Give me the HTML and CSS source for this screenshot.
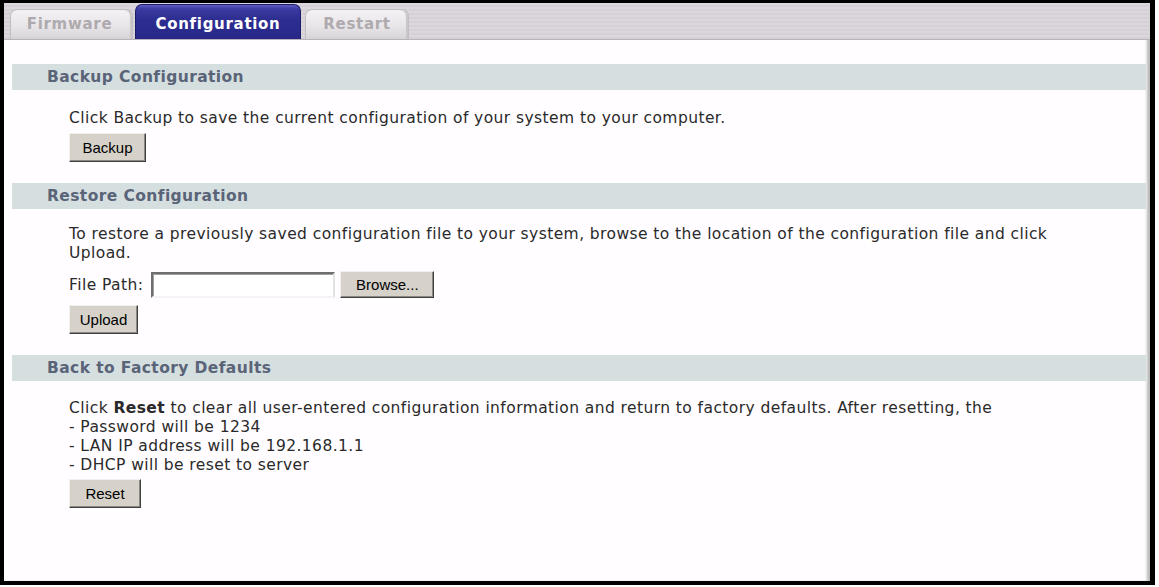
FILE: index.html
```html
<!DOCTYPE html>
<html>
<head>
<meta charset="utf-8">
<title>Configuration</title>
<link rel="stylesheet" href="styles.css">
</head>
<body>
<div class="frame">
  <div class="page">
    <div class="tabbar">
      <div class="tab tab-off tab-firmware">Firmware</div>
      <div class="tab tab-on tab-config">Configuration</div>
      <div class="tab tab-off tab-restart">Restart</div>
    </div>
    <div class="content">
      <section class="section sec-backup">
        <div class="section-head">Backup Configuration</div>
        <div class="section-body">
          <p class="text">Click Backup to save the current configuration of your system to your computer.</p>
          <button class="btn btn-backup">Backup</button>
        </div>
      </section>
      <section class="section sec-restore">
        <div class="section-head">Restore Configuration</div>
        <div class="section-body">
          <p class="text">To restore a previously saved configuration file to your system, browse to the location of the configuration file and click<br>Upload.</p>
          <div class="file-row">
            <span class="label">File Path:</span>
            <span class="input"></span>
            <button class="btn btn-browse">Browse...</button>
          </div>
          <button class="btn btn-upload">Upload</button>
        </div>
      </section>
      <section class="section sec-reset">
        <div class="section-head">Back to Factory Defaults</div>
        <div class="section-body">
          <p class="text">Click <b>Reset</b> to clear all user-entered configuration information and return to factory defaults. After resetting, the<br>- Password will be 1234<br>- LAN IP address will be 192.168.1.1<br>- DHCP will be reset to server</p>
          <button class="btn btn-reset">Reset</button>
        </div>
      </section>
    </div>
  </div>
</div>
</body>
</html>
```

FILE: styles.css
```css
* { box-sizing: border-box; }
html, body { margin: 0; padding: 0; background: #ffffff; }
body { width: 1159px; height: 587px; overflow: hidden; }

.frame {
  width: 1155px;
  height: 585px;
  border-style: solid;
  border-color: #000;
  border-width: 3px 5px 4px 4px;
  background: #fffdff;
}

.page {
  height: 100%;
  display: flex;
  flex-direction: column;
  box-shadow: inset -4px 0 3px -1px #b8b8b8;
}

.tabbar {
  height: 37px;
  flex: none;
  display: flex;
  align-items: flex-end;
  padding-left: 6px;
  gap: 2px;
  background: repeating-linear-gradient(to bottom, #dbd7dd 0, #dbd7dd 2px, #d4d0d6 2px, #d4d0d6 4px);
  border-bottom: 1px solid #b8b4ba;
  font-family: "DejaVu Sans", Verdana, sans-serif;
  font-weight: bold;
  font-size: 15px;
  letter-spacing: 0.7px;
}

.tab {
  display: flex;
  align-items: flex-start;
  justify-content: center;
  border-radius: 7px 7px 0 0;
  padding-top: 5px;
}

.tab-off {
  height: 30px;
  color: #aeaaae;
  background: linear-gradient(to bottom, #f4f2f4 0, #e6e4e6 60%, #d6d4d6 100%);
  border: 1px solid #c2bec2;
  border-bottom: none;
  box-shadow: inset -2px 0 1px #c8c6c8;
}
.tab-firmware { width: 123px; padding-right: 4px; }
.tab-restart { width: 104px; margin-left: 2px; }

.tab-on {
  height: 35px;
  width: 166px;
  padding-top: 10px;
  color: #ffffff;
  background: linear-gradient(to bottom, #5c5cc4 0, #3a3aa2 4px, #2e2e92 40%, #282888 100%);
  border: 1px solid #1c1c66;
  border-bottom: none;
}

.content {
  flex: 1;
  padding: 24px 4px 0 8px;
  font-family: "DejaVu Sans", Verdana, sans-serif;
  font-size: 15.5px;
  letter-spacing: 0.42px;
  color: #2a2a2a;
}

.section-head {
  height: 26px;
  background: #d6dfe0;
  color: #5a6478;
  font-weight: bold;
  font-size: 15.5px;
  letter-spacing: 0.4px;
  line-height: 26px;
  padding-left: 35px;
}

.section-body {
  padding-left: 57px;
  display: flex;
  flex-direction: column;
  align-items: flex-start;
}

.text {
  margin: 0;
  line-height: 19px;
}

.sec-backup .text { margin-top: 19px; }
.sec-backup .btn { margin-top: 5px; }
.sec-restore { margin-top: 21px; }
.sec-restore .text { margin-top: 16px; }
.sec-reset { margin-top: 21px; }
.sec-reset .text { margin-top: 18px; }
.sec-reset .btn { margin-top: 4px; }

.btn {
  font-family: "Liberation Sans", Arial, sans-serif;
  font-size: 15px;
  letter-spacing: 0;
  color: #000;
  background: #d6d2ca;
  height: 29px;
  padding: 0;
  border: 1px solid;
  border-color: #f2f0ec #404040 #404040 #f2f0ec;
  box-shadow: inset -1px -1px 0 #8a8882;
  border-radius: 0;
}
.btn-backup { width: 77px; }
.btn-upload { width: 69px; margin-top: 7px; }
.btn-reset { width: 72px; }
.btn-browse { width: 94px; height: 27px; margin-left: 5px; }

.file-row {
  display: flex;
  align-items: center;
  margin-top: 8px;
}
.label { margin-right: 8px; }
.input {
  display: block;
  width: 184px;
  height: 26px;
  background: #fff;
  border: 2px solid;
  border-color: #6e6e6e #e4e2e0 #f4f4f4 #6e6e6e;
  box-shadow: inset 1px 1px 0 #a0a0a0;
}
```
